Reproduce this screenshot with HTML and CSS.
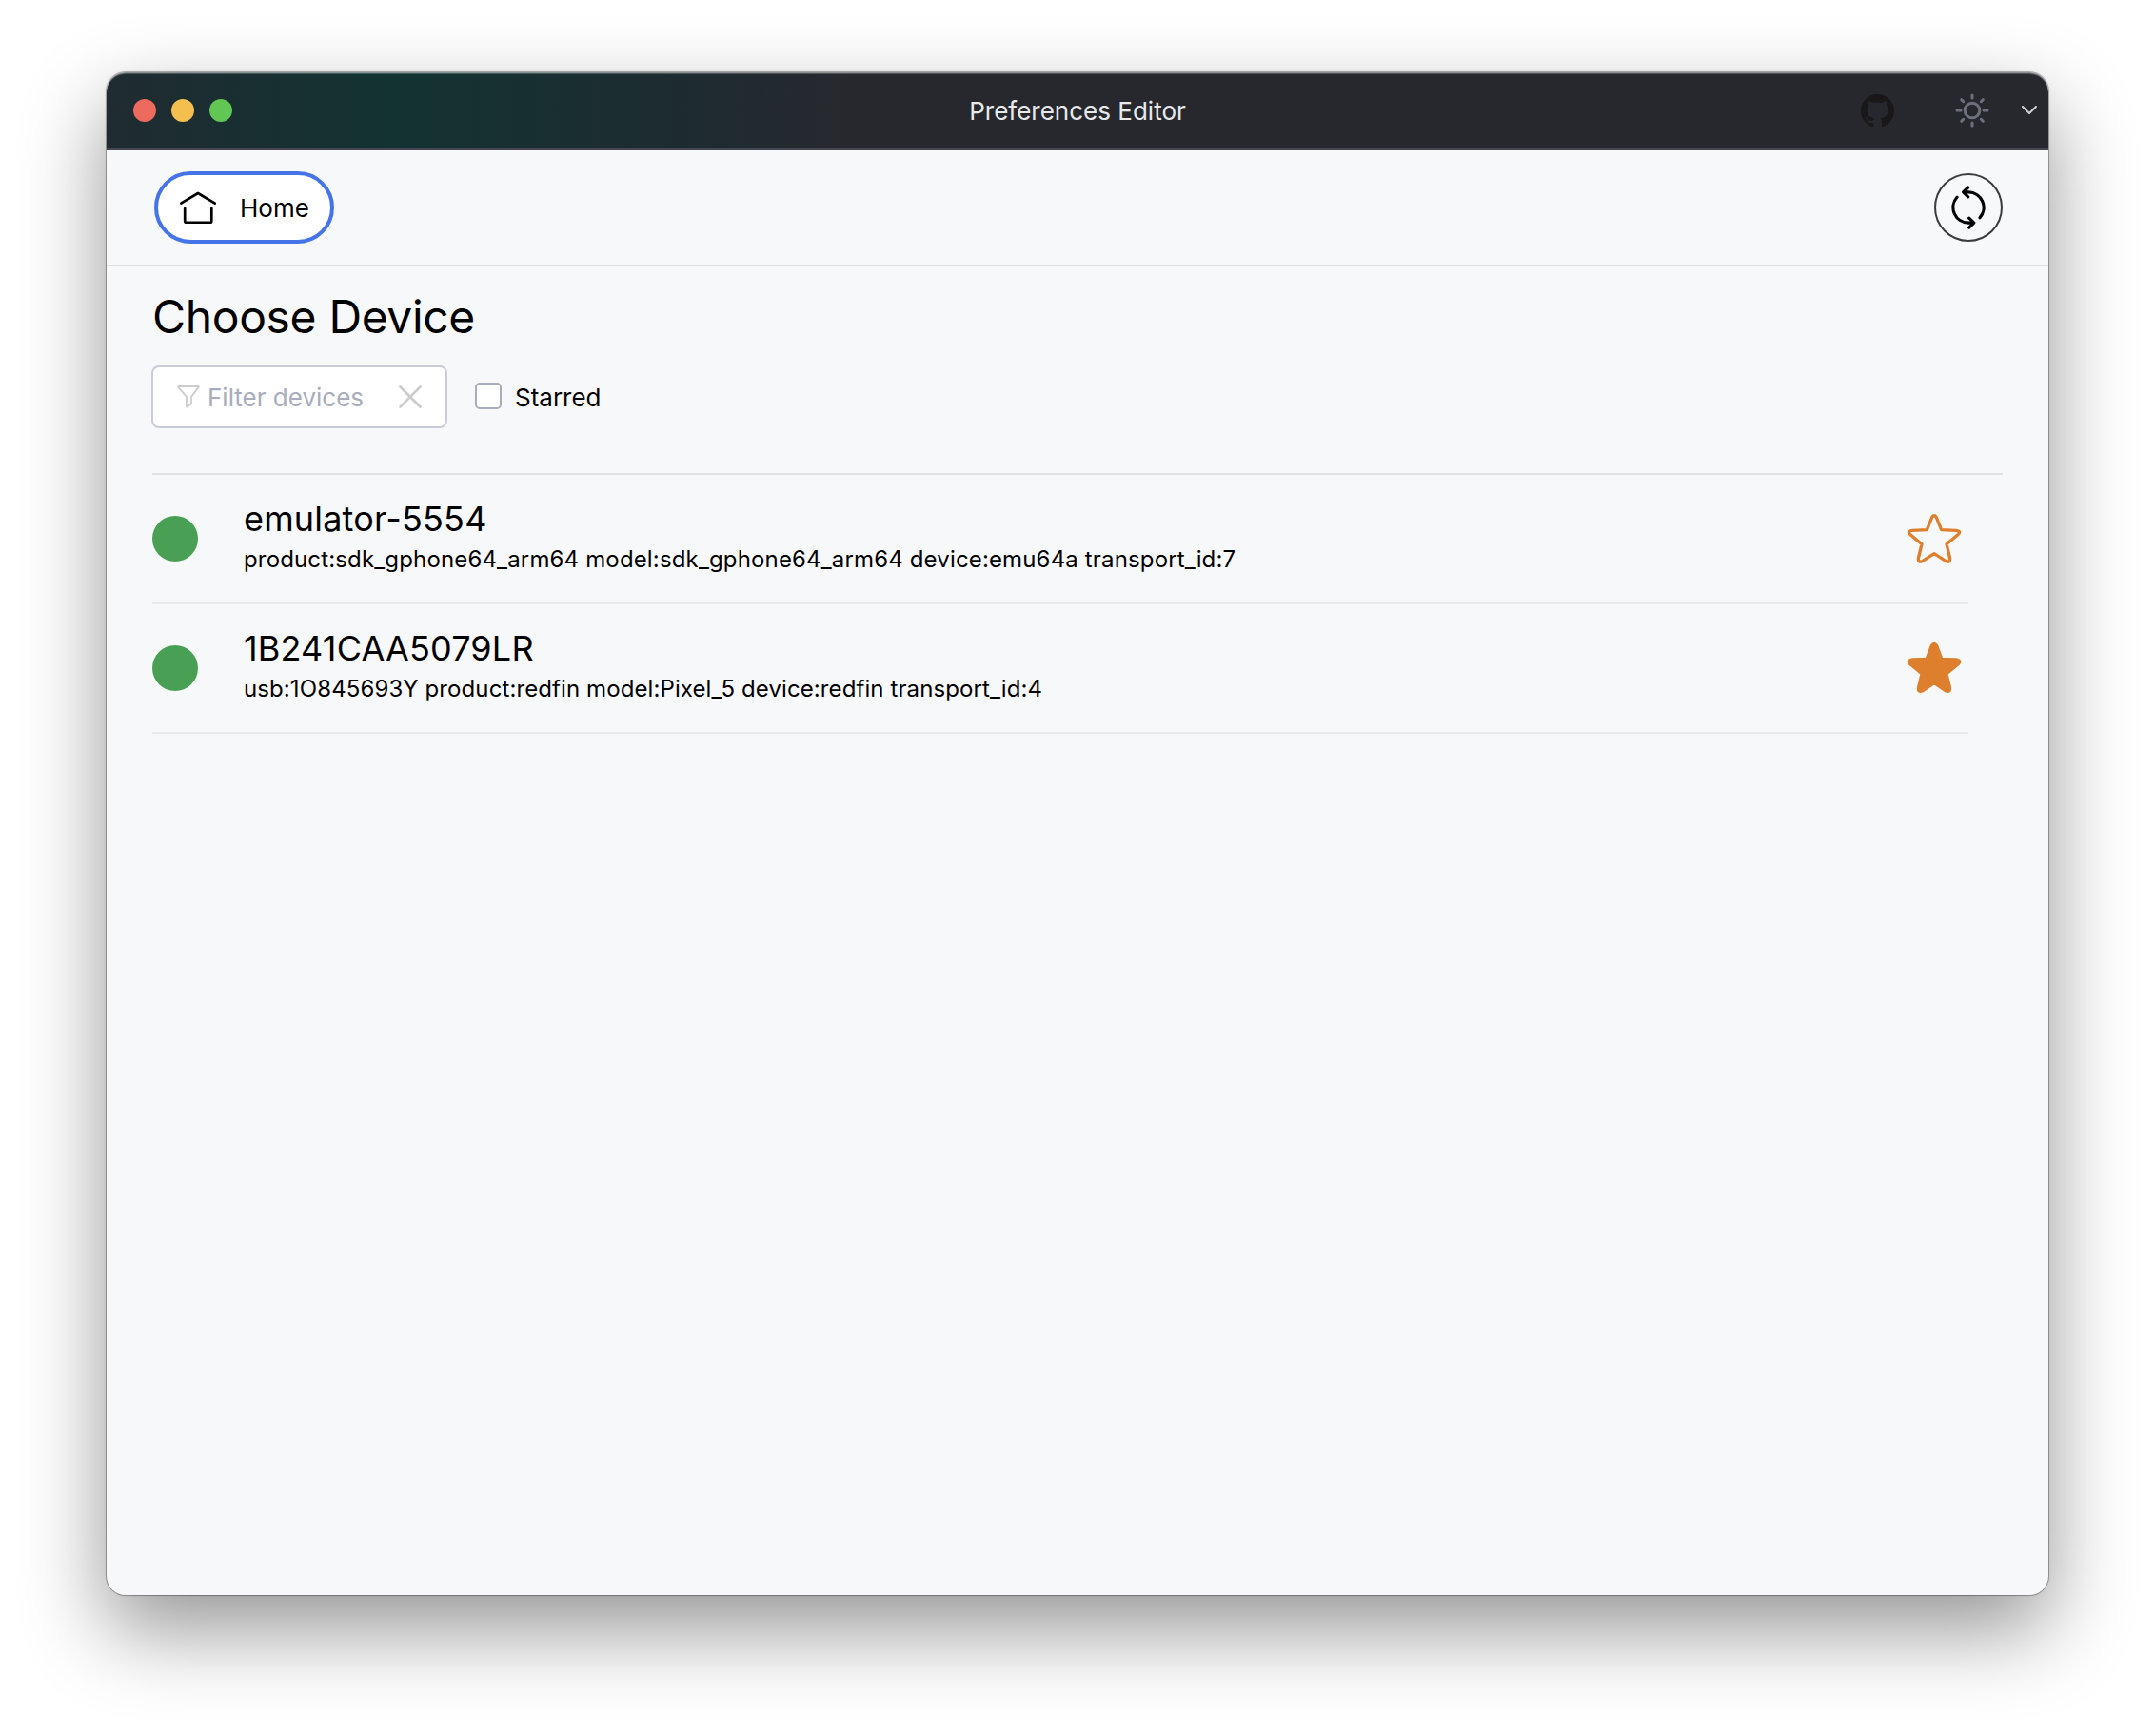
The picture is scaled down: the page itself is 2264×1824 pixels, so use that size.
FILE: index.html
```html
<!DOCTYPE html>
<html lang="en">
<head>
<meta charset="utf-8">
<title>Preferences Editor</title>
<link rel="stylesheet" href="styles.css">
</head>
<body>
<main class="window">
  <header class="titlebar">
    <div class="lights">
      <span class="light light-close"></span>
      <span class="light light-min"></span>
      <span class="light light-max"></span>
    </div>
    <h1 class="window-title">Preferences Editor</h1>
    <div class="title-actions">
      <svg class="github" viewBox="0 0 16 16"><path fill-rule="evenodd" d="M8 0C3.58 0 0 3.58 0 8c0 3.54 2.29 6.53 5.47 7.59.4.07.55-.17.55-.38 0-.19-.01-.82-.01-1.49-2.01.37-2.53-.49-2.69-.94-.09-.23-.48-.94-.82-1.13-.28-.15-.68-.52-.01-.53.63-.01 1.08.58 1.23.82.72 1.21 1.87.87 2.33.66.07-.52.28-.87.51-1.07-1.78-.2-3.64-.89-3.64-3.95 0-.87.31-1.59.82-2.15-.08-.2-.36-1.02.08-2.12 0 0 .67-.21 2.2.82.64-.18 1.32-.27 2-.27s1.36.09 2 .27c1.53-1.04 2.2-.82 2.2-.82.44 1.1.16 1.92.08 2.12.51.56.82 1.27.82 2.15 0 3.07-1.87 3.75-3.65 3.95.29.25.54.73.54 1.48 0 1.07-.01 1.93-.01 2.2 0 .21.15.46.55.38A8.01 8.01 0 0 0 16 8c0-4.42-3.58-8-8-8z"/></svg>
      <svg class="sun" viewBox="0 0 36 36"><circle cx="18" cy="18" r="7.8"/><path d="M18 2v3M18 31v3M2 18h4M30 18h4M6.700 6.700l2 2M27.300 27.300l2 2M6.700 29.300l2-2M27.300 8.700l2-2"/></svg>
      <svg class="chevron" viewBox="0 0 16 10"><path d="M1 1l7 7 7-7"/></svg>
    </div>
  </header>
  <nav class="toolbar">
    <button class="home">
      <svg class="home-icon" viewBox="0 0 38 34"><path d="M1.200 12.600L19 2l17.800 10.600M5.200 18v13.300a1.600 1.600 0 0 0 1.600 1.600h24.900a1.600 1.600 0 0 0 1.600-1.600V18"/></svg>
      <span>Home</span>
    </button>
    <button class="refresh" aria-label="Refresh">
      <svg class="refresh-icon" viewBox="0 0 36 46"><path d="M30 33.700A16.100 16.100 0 0 0 18 6.900H13M17.700 2L12.600 6.900l5.100 5M6 12.300A16.100 16.100 0 0 0 18 39.100h5M18.700 34.200L23.800 39.100l-5.100 5"/></svg>
    </button>
  </nav>
  <section class="content">
    <h2 class="heading">Choose Device</h2>
    <div class="filters">
      <div class="filter-box">
        <svg class="funnel" viewBox="0 0 24 24"><path d="M1.500 1h21q.5 0 .3.600l-7.800 10.400v7.200l-4.300 3.300q-.700.400-.7-.300V12L1.200 1.600q-.2-.6.300-.600z"/></svg>
        <span class="placeholder">Filter devices</span>
        <svg class="clear" viewBox="0 0 24 24"><path d="M1.500 1.500l21 21M22.500 1.500l-21 21"/></svg>
      </div>
      <label class="starred"><span class="checkbox"></span><span class="starred-text">Starred</span></label>
    </div>
    <ul class="devices">
      <li class="device">
        <span class="status"></span>
        <div class="info"><div class="name">emulator-5554</div><div class="detail">product:sdk_gphone64_arm64 model:sdk_gphone64_arm64 device:emu64a transport_id:7</div></div>
        <svg class="star" viewBox="0 0 60 60"><path d="M27.700 7.500Q30 4 32.300 7.500L37.600 20.700L53 21.300Q59 22 55.200 25.500L43 35.700L46.500 50Q47.300 55.500 42.500 53.700L30 45.600L17.500 53.700Q12.700 55.500 13.500 50L17 35.700L4.800 25.500Q1 22 7 21.300L22.400 20.700Z"/></svg>
      </li>
      <li class="device">
        <span class="status"></span>
        <div class="info"><div class="name">1B241CAA5079LR</div><div class="detail detail-usb">usb:1O845693Y product:redfin model:Pixel_5 device:redfin transport_id:4</div></div>
        <svg class="star star-on" viewBox="0 0 60 60"><path d="M27.700 6.500Q30 3 32.300 6.500L37.600 20.700L53 21.300Q58.500 22 55 25.500L42.500 35.700L46 50Q47 55.300 42.500 53.700L30 45L17.500 53.700Q13 55.300 14 50L17.500 35.700L5 25.500Q1.500 22 7 21.300L22.400 20.700Z"/></svg>
      </li>
    </ul>
  </section>
</main>
</body>
</html>
```
FILE: styles.css
```css
* { box-sizing: border-box; }
body {
  margin: 0;
  padding: 76px 112px 148px;
  background: #fff;
  color: #000;
  font-family: Inter, "Liberation Sans", sans-serif;
  font-size: 26px;
}
h1, h2, ul { margin: 0; padding: 0; font-weight: 400; list-style: none; }
button { font: inherit; color: inherit; margin: 0; padding: 0; }
svg { display: block; flex: none; fill: none; stroke-linecap: round; stroke-linejoin: round; }
.window {
  height: 1600px;
  border-radius: 20px;
  overflow: hidden;
  background: #f7f8fa;
  box-shadow: 0 0 0 1px rgba(0,0,0,.25), 0 0 3px rgba(0,0,0,.2), 0 36px 88px rgba(0,0,0,.42);
}
.titlebar {
  display: grid;
  grid-template-columns: 1fr auto 1fr;
  align-items: center;
  height: 82px;
  border-bottom: 2px solid #45464f;
  border-radius: 20px 20px 0 0;
  background: linear-gradient(90deg, #1f2b30 0, #133232 300px, #1e2b30 620px, #27282e 780px);
  box-shadow: inset 0 1px rgba(255,255,255,.35), inset 0 2px rgba(255,255,255,.2);
}
.lights { display: flex; gap: 16px; padding-left: 28px; }
.light { width: 24px; height: 24px; border-radius: 50%; }
.light-close { background: #ed6a5e; }
.light-min { background: #f5bf4f; }
.light-max { background: #62c654; }
.window-title { padding-top: 2px; font-size: 26px; line-height: 32px; color: #e8e9eb; }
.title-actions { display: flex; align-items: center; justify-content: flex-end; padding-right: 12px; }
.github { width: 35px; height: 35px; fill: #191717; }
.sun { width: 36px; height: 36px; margin-left: 64px; stroke: #6c707e; stroke-width: 3; }
.chevron { width: 16px; height: 10px; margin-left: 34px; stroke: #ced0d6; stroke-width: 2; }
.toolbar {
  display: flex;
  align-items: center;
  justify-content: space-between;
  height: 122px;
  padding: 0 48px 0 50px;
  border-bottom: 2px solid #dfe1e4;
}
.home {
  display: flex;
  align-items: center;
  width: 189px;
  height: 76px;
  padding-left: 23px;
  gap: 25px;
  border: 4px solid #4573e8;
  border-radius: 38px;
  background: #fff;
}
.home-icon { width: 38px; height: 34px; stroke: #000; stroke-width: 2.700; }
.refresh {
  display: flex;
  align-items: center;
  justify-content: center;
  width: 72px;
  height: 72px;
  border: 2px solid #3c3c3d;
  border-radius: 50%;
  background: transparent;
}
.refresh-icon { width: 36px; height: 46px; stroke: #000; stroke-width: 3.200; }
.content { padding: 23px 48px 0; }
.heading { font-size: 48px; line-height: 60px; letter-spacing: -.35px; }
.filters { display: flex; align-items: center; margin-top: 21px; height: 66px; }
.filter-box {
  display: flex;
  align-items: center;
  width: 311px;
  height: 66px;
  margin-left: -1px;
  padding: 0 25px;
  border: 2px solid #c9ccd6;
  border-radius: 8px;
  background: #fff;
}
.funnel { width: 24px; height: 24px; stroke: #ccc; stroke-width: 1.800; }
.placeholder { margin-left: 8px; color: #a8adbd; }
.clear { width: 24px; height: 24px; margin-left: auto; stroke: #ccc; stroke-width: 2.700; }
.starred { display: flex; align-items: center; margin-left: 29px; gap: 14px; }
.checkbox { width: 28px; height: 28px; margin-bottom: 2px; border: 2px solid #a8adbd; border-radius: 5px; background: #fff; }
.devices { margin-top: 47px; padding-right: 36px; }
.devices::before { content: ""; display: block; height: 2px; margin-right: -36px; background: #dfe1e4; }
.device { display: flex; align-items: center; height: 136px; border-bottom: 2px solid #e9eaec; }
.status { width: 48px; height: 48px; border-radius: 50%; background: #499f53; }
.info { flex: 1; margin: -5px 0 0 48px; }
.name { margin-bottom: 5px; font-size: 36px; line-height: 44px; letter-spacing: .17px; }
.detail { font-size: 24px; line-height: 32px; letter-spacing: .15px; }
.detail-usb { letter-spacing: .1px; }
.star { width: 60px; height: 60px; margin-right: 6px; stroke: #de7f2e; stroke-width: 3.300; }
.star-on { fill: #de7f2e; stroke-width: 4; }
```
